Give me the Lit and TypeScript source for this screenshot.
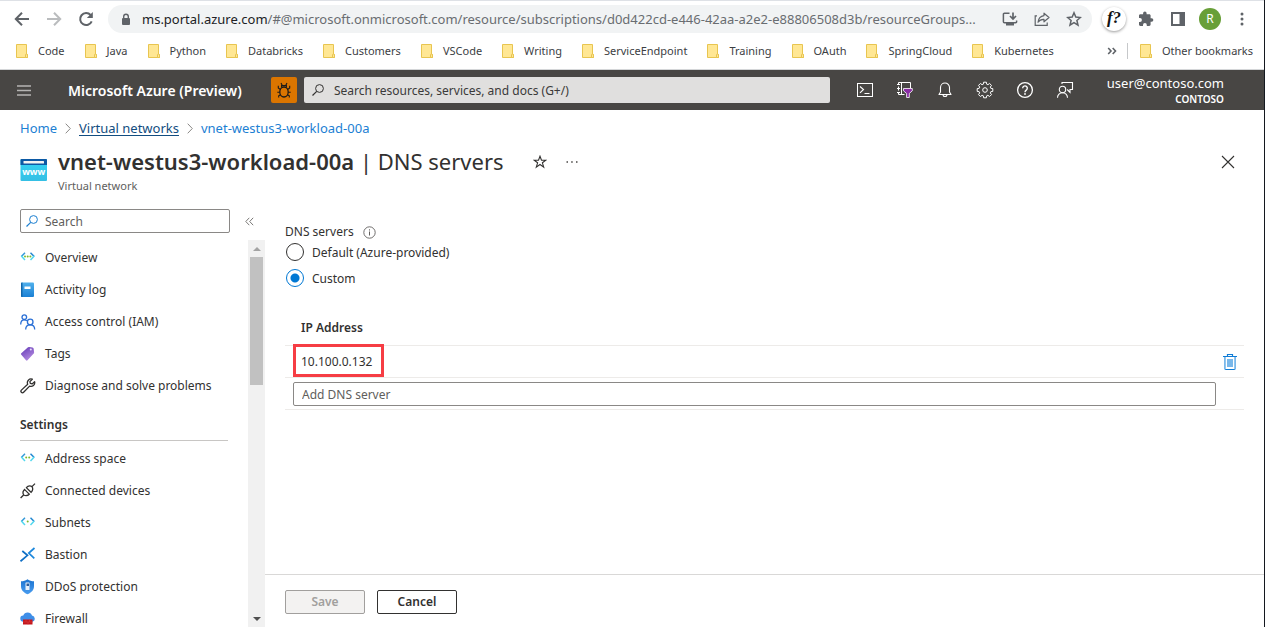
import { LitElement, html, svg, css, TemplateResult } from "lit";
import { customElement, property, state } from "lit/decorators.js";

const icon = (w: number, h: number, body: TemplateResult, box = `0 0 ${w} ${h}`) =>
  html`<svg width=${w} height=${h} viewBox=${box} fill="none" aria-hidden="true">${body}</svg>`;

const base = css`
  * { box-sizing: border-box; }
  svg { display: block; flex: none; }
  button { font: inherit; color: inherit; background: none; border: 0; padding: 0; margin: 0; cursor: pointer; }
  input { font: inherit; margin: 0; }
  a { color: inherit; text-decoration: none; }
`;

/* ---------- Browser chrome ---------- */

const back = icon(16, 16, svg`<path d="M15 8H2.2M8 1.8 1.8 8 8 14.2" stroke="#5f6368" stroke-width="2"/>`);
const forward = icon(16, 16, svg`<path d="M1 8h12.8M8 1.8 14.2 8 8 14.2" stroke="#babcbe" stroke-width="2"/>`);
const reload = icon(16, 16, svg`<path d="M13.7 10.4A6 6 0 1 1 12.6 4" stroke="#5f6368" stroke-width="2"/><path d="M14.8 1v6H8.8z" fill="#5f6368"/>`);
const lock = icon(10, 13, svg`<rect x="1" y="5" width="8" height="7" rx="1" fill="#5f6368"/><path d="M2.7 6V3.6a2.3 2.3 0 0 1 4.6 0V6" stroke="#5f6368" stroke-width="1.4"/>`);
const install = icon(16, 16, svg`<path d="M7.500 2.200H2.400a1 1 0 0 0-1 1v7.600a1 1 0 0 0 1 1h11.200a1 1 0 0 0 1-1V9.500" stroke="#5f6368" stroke-width="1.500"/><path d="M4 12h8v2.500H4z" fill="#5f6368"/><path d="M11 1.500v6.200M8 5l3 3 3-3" stroke="#5f6368" stroke-width="1.700"/>`);
const share = icon(16, 16, svg`<path d="M3 4.800H1.200v9.600h12v-3" stroke="#5f6368" stroke-width="1.200"/><path d="M10 2.200l5 4.300-5 4.300V8.400C7.300 8.300 5.400 9.200 4 11.200 4.400 7.600 6.400 5.100 10 4.600z" stroke="#5f6368" stroke-width="1.200" stroke-linejoin="round"/>`);
const starChrome = icon(16, 16, svg`<path d="m8 1.800 1.800 4.300 4.600.4-3.500 3 1.100 4.600L8 11.600l-4 2.500 1.100-4.600-3.500-3 4.600-.4z" stroke="#5f6368" stroke-width="1.500"/>`);
const puzzle = icon(16, 16, svg`<path d="M13.600 7.300h-1V4.600c0-.8-.6-1.400-1.400-1.400H8.600v-1a1.700 1.700 0 0 0-3.500 0v1H2.400C1.600 3.200 1 3.800 1 4.600v2.500h1a1.900 1.900 0 0 1 0 3.800H1v2.600c0 .8.6 1.400 1.400 1.400H5v-1a1.900 1.900 0 0 1 3.800 0v1h2.400c.8 0 1.400-.6 1.400-1.400v-2.700h1a1.700 1.700 0 0 0 0-3.500z" fill="#5f6368"/>`);
const panel = icon(14, 14, svg`<rect x="1" y="1" width="12" height="12" stroke="#5f6368" stroke-width="2"/><path d="M8.500 1H13v12H8.500z" fill="#5f6368"/>`);
const kebab = icon(4, 14, svg`<circle cx="2" cy="2" r="1.500" fill="#5f6368"/><circle cx="2" cy="7" r="1.500" fill="#5f6368"/><circle cx="2" cy="12" r="1.500" fill="#5f6368"/>`);
const folder = icon(12, 14, svg`<path d="M.5.5h10v10h1v3H.5z" fill="#ffe794" stroke="#e8c550"/><path d="M9.500 13.500V11q0-1 1-1t1 1v2.500z" fill="#ffe794" stroke="#e8c550"/>`);
const overflow = icon(10, 8, svg`<path d="M1.200 1 4 4 1.200 7M5.700 1l2.800 3-2.800 3" stroke="#5f6368" stroke-width="1.600"/>`);

@customElement("browser-bar")
class BrowserBar extends LitElement {
  static styles = [base, css`
    :host { display: block; color: #3c4043; background: #fff; border-top: 1px solid #dee1e6; border-bottom: 1px solid #d4d6d8; }
    .toolbar { display: flex; align-items: center; gap: 6px; padding: 4px 6px; }
    .group { display: flex; }
    .tool { width: 32px; height: 28px; display: flex; align-items: center; justify-content: center; }
    .omnibox { flex: 1; min-width: 0; height: 28px; display: flex; align-items: center; padding: 0 2px 0 13px; border-radius: 14px; background: #f1f3f4; }
    .url { flex: 1; min-width: 0; margin-left: 11px; overflow: hidden; white-space: nowrap; font-size: 13px; line-height: 20px; color: #696d71; }
    .host { color: #202124; }
    .ext { width: 24px; height: 24px; border-radius: 50%; background: #fff; box-shadow: 0 1px 3px #0006; font: italic bold 17px/22px "Liberation Serif", serif; color: #111; text-align: center; }
    .avatar { width: 22px; height: 22px; border-radius: 50%; background: #689f38; color: #fff; font-size: 12px; line-height: 22px; text-align: center; }
    .bookmarks { display: flex; align-items: center; height: 32px; padding: 0 11px 4px 16px; font-size: 11px; line-height: 16px; white-space: nowrap; }
    .list { flex: 1; display: flex; gap: 20px; min-width: 0; }
    .mark { display: flex; align-items: center; gap: 10px; }
    .rule { width: 1px; height: 16px; margin: 0 12px 0 10px; background: #c6c8ca; }
  `];

  render() {
    const marks = ["Code", "Java", "Python", "Databricks", "Customers", "VSCode", "Writing", "ServiceEndpoint", "Training", "OAuth", "SpringCloud", "Kubernetes"];
    return html`
      <div class="toolbar">
        <div class="group">
          <button class="tool" aria-label="Back">${back}</button>
          <button class="tool" aria-label="Forward">${forward}</button>
          <button class="tool" aria-label="Reload">${reload}</button>
        </div>
        <div class="omnibox">
          ${lock}
          <div class="url"><span class="host">ms.portal.azure.com</span>/#@microsoft.onmicrosoft.com/resource/subscriptions/d0d422cd-e446-42aa-a2e2-e88806508d3b/resourceGroups...</div>
          <button class="tool" aria-label="Install">${install}</button>
          <button class="tool" aria-label="Share">${share}</button>
          <button class="tool" aria-label="Bookmark">${starChrome}</button>
        </div>
        <div class="group">
          <button class="tool" aria-label="Extension"><span class="ext">f?</span></button>
          <button class="tool" aria-label="Extensions">${puzzle}</button>
          <button class="tool" aria-label="Side panel">${panel}</button>
          <button class="tool" aria-label="Profile"><span class="avatar">R</span></button>
          <button class="tool" aria-label="Menu">${kebab}</button>
        </div>
      </div>
      <div class="bookmarks">
        <div class="list">${marks.map((m) => html`<a class="mark" href="#">${folder}<span>${m}</span></a>`)}</div>
        <button aria-label="More bookmarks">${overflow}</button>
        <span class="rule"></span>
        <a class="mark" href="#">${folder}<span>Other bookmarks</span></a>
      </div>`;
  }
}

/* ---------- Portal header ---------- */

const burger = icon(14, 11, svg`<path d="M0 1h14M0 5.500h14M0 10h14" stroke="#b5b4b2" stroke-width="1.400"/>`);
const bug = icon(16, 18, svg`<ellipse cx="8" cy="11" rx="4.200" ry="5" stroke="#1b1a19" stroke-width="1.300"/><path d="M5.600 6.500V4.600h4.800v1.900M6.300 4.400 5 2M9.700 4.400 11 2M4 8.300 2.300 7V4.800M12 8.300 13.700 7V4.800M3.800 11.200H1.300M12.200 11.200h2.500M4.500 13.800l-1.800 1v1.700M11.500 13.800l1.800 1v1.700" stroke="#1b1a19" stroke-width="1.100"/>`);
const lens = (color: string) => icon(12, 12, svg`<circle cx="7.500" cy="4.500" r="3.900" stroke=${color}/><path d="M4.700 7.300.5 11.500" stroke=${color} stroke-width="1.200"/>`);
const shell = icon(18, 16, svg`<rect x="1.500" y="1.500" width="15" height="13" stroke="#fff"/><path d="m4 4.500 3.500 3L4 10.800M8.500 11.500h5" stroke="#fff" stroke-width="1.100"/>`);
const filter = icon(18, 18, svg`<path d="M2.500 1.500h12V7M5.500 1.500v12M2.500 13.500h6M2.500 1.500v2M2.500 11.500v2M1 3.500h3M1 7.500h3M1 11.500h3M2.500 5.500v4" stroke="#fff"/><path d="M7.500 7.500h8.800v2.300l-3 2.700v4h-2.700v-4l-3.100-2.700z" fill="#8a2da5" stroke="#fff" stroke-width=".8"/>`);
const bell = icon(16, 18, svg`<path d="M2 13.500h12L12.500 11V6.500a4.500 4.500 0 0 0-9 0V11zM6 13.500a2 2 0 0 0 4 0" stroke="#fff" stroke-width="1.100" stroke-linejoin="round"/>`);
const gear = icon(18, 18, svg`<circle cx="9" cy="9" r="2.300" stroke="#fff"/><path d="m7.600 1.200-.3 2-1.200.5-1.700-1.200-1.900 1.900 1.200 1.700-.5 1.200-2 .3v2.800l2 .3.500 1.200-1.200 1.700 1.900 1.900 1.700-1.200 1.200.5.300 2h2.800l.3-2 1.200-.5 1.700 1.200 1.900-1.900-1.200-1.700.5-1.200 2-.3V7.600l-2-.3-.5-1.200 1.200-1.700-1.900-1.900-1.700 1.200-1.200-.5-.3-2z" stroke="#fff" stroke-linejoin="round"/>`);
const help = icon(18, 18, svg`<circle cx="9" cy="9" r="7.400" stroke="#fff" stroke-width="1.300"/><path d="M6.700 7.200a2.300 2.300 0 1 1 3.700 1.800C9.500 9.700 9 10 9 11.200" stroke="#fff" stroke-width="1.400"/><circle cx="9" cy="13" r=".9" fill="#fff"/>`);
const feedback = icon(18, 18, svg`<circle cx="6.500" cy="8.500" r="3.200" stroke="#fff" stroke-width="1.100"/><path d="M1.500 16.800c0-3.200 2.200-5.100 5-5.100s5 1.900 5 5.100M6 3V1.500h10.500v7H14v2.800l-2.800-2.800" stroke="#fff" stroke-width="1.100"/>`);

@customElement("portal-header")
class PortalHeader extends LitElement {
  static styles = [base, css`
    :host { display: flex; align-items: center; height: 40px; background: #484644; color: #fff; }
    .menu { width: 48px; height: 40px; padding-left: 17px; }
    .brand { width: 203px; margin-left: 20px; padding-top: 2px; font-size: 14px; line-height: 20px; font-weight: 600; white-space: nowrap; }
    .bug { width: 26px; height: 26px; display: flex; align-items: center; justify-content: center; background: #db7500; border-radius: 2px; }
    .search { flex: 1; min-width: 0; height: 26px; display: flex; align-items: center; gap: 10px; margin: 0 15px 0 7px; padding-left: 8px; background: #e0dfde; border-radius: 2px; }
    .search input { flex: 1; min-width: 0; border: 0; outline: 0; padding: 2px 0 0; background: none; font-size: 12px; line-height: 18px; color: #323130; }
    .search input::placeholder { color: #3b3a39; opacity: 1; }
    .icons { display: flex; }
    .icons button { width: 40px; height: 40px; display: flex; align-items: center; justify-content: center; }
    .account { width: 179px; padding: 2px 40px 0 0; text-align: right; font-size: 13px; line-height: 16px; }
    .tenant { font-size: 10px; line-height: 16px; font-weight: 600; }
  `];

  render() {
    const tools: [string, TemplateResult][] = [["Cloud Shell", shell], ["Directories", filter], ["Notifications", bell], ["Settings", gear], ["Help", help], ["Feedback", feedback]];
    return html`
      <button class="menu" aria-label="Portal menu">${burger}</button>
      <a class="brand" href="#">Microsoft Azure (Preview)</a>
      <button class="bug" aria-label="Report a bug">${bug}</button>
      <label class="search">${lens("#323130")}<input type="text" aria-label="Search resources" placeholder="Search resources, services, and docs (G+/)"></label>
      <div class="icons">${tools.map(([n, i]) => html`<button aria-label=${n}>${i}</button>`)}</div>
      <div class="account"><div>user@contoso.com</div><div class="tenant">CONTOSO</div></div>`;
  }
}

/* ---------- Side menu ---------- */

const brackets = (dots: number[]) => icon(16, 16, svg`
  <path d="M5 2.800 1.300 6.500" stroke="#3399d8" stroke-width="1.500"/><path d="M1.300 6.100 5 9.900" stroke="#50d8ee" stroke-width="1.500"/>
  <path d="m10.500 2.800 3.700 3.700" stroke="#1f86d0" stroke-width="1.500"/><path d="m14.200 6.100-3.700 3.800" stroke="#50d8ee" stroke-width="1.500"/>
  ${dots.map((x) => svg`<circle cx=${x} cy="6.400" r="1" fill="#7fba29"/>`)}`);
const logbook = icon(16, 16, svg`<defs><linearGradient id="lg" x2="0" y2="1"><stop stop-color="#50b0ec"/><stop offset="1" stop-color="#1b80d4"/></linearGradient></defs><rect x="1" y=".5" width="13" height="14.500" rx="1" fill="url(#lg)"/><path d="M1 1.500a1 1 0 0 1 1-1h.5v14.500H2a1 1 0 0 1-1-1z" fill="#1267ac"/><rect x="4.500" y="4.500" width="6" height="2.500" fill="#fff"/>`);
const people = icon(16, 16, svg`<circle cx="4.300" cy="3.200" r="2.300" stroke="#2b70d6" stroke-width="1.300"/><path d="M.7 10.500c0-3 1.400-4.700 3.600-4.700 1.200 0 2 .4 2.600 1.100" stroke="#2b70d6" stroke-width="1.300"/><circle cx="10.200" cy="8" r="2.800" stroke="#2b70d6" stroke-width="1.300"/><path d="M5.700 15.500c0-3 1.800-4.600 4.500-4.600s4.500 1.600 4.500 4.600" stroke="#2b70d6" stroke-width="1.300"/>`);
const tag = icon(16, 16, svg`<defs><linearGradient id="tg" x1="0" y1="0" x2=".6" y2="1"><stop stop-color="#5f35b5"/><stop offset="1" stop-color="#b48be0"/></linearGradient></defs><path d="M1.300 7.200 8 1.300a1.500 1.500 0 0 1 1.200-.4l3.300.6a1.500 1.500 0 0 1 1.200 1.300l.4 3.600a1.500 1.500 0 0 1-.4 1.200L7.500 14.300a1 1 0 0 1-1.500 0L1.300 8.700a1 1 0 0 1 0-1.500z" fill="url(#tg)"/><circle cx="10.800" cy="3.600" r="1" fill="#e9defa"/>`);
const wrench = icon(16, 16, svg`<path d="M14.600 3.700a3.700 3.700 0 0 1-5 4.400l-6 6.200a1.500 1.500 0 0 1-2.200-2.200l6.300-5.900a3.700 3.700 0 0 1 4.600-5L9.900 3.600l.4 1.800 1.800.5z" stroke="#323130" stroke-width="1.300" stroke-linejoin="round"/>`);
const plug = icon(16, 16, svg`<path d="m.6 15 3-3M15 .6l-3 3M6.300 4.600l4.700 4.700M4.500 6.400l4.700 4.700M5 6c-1.800 1.600-2.600 4-1.300 6 2 1.200 4.300.6 6-1.300M6 4.900c1.800-2 4.100-2.600 6-1.300 1.300 2 .6 4.300-1.300 6.100" stroke="#323130" stroke-width="1.300"/>`);
const bastion = icon(16, 16, svg`<path d="M2.300 4 7.500 8.300.5 14.300" stroke="#0f6fc5" stroke-width="1.700"/><path d="M14.500 1 8.800 6l5.500 5.300" stroke="#1c87dc" stroke-width="1.700"/>`);
const shield = icon(16, 16, svg`<defs><linearGradient id="sg" x2="0" y2="1"><stop stop-color="#1b73d0"/><stop offset="1" stop-color="#4a9df0"/></linearGradient></defs><path d="M7.500.3C9.500 1.800 11.700 2.300 14 2.300v5c0 4-3 6.500-6.500 8C4 13.800 1 11.300 1 7.300v-5C3.300 2.300 5.500 1.800 7.500.3z" fill="url(#sg)"/><rect x="5.500" y="3.500" width="4" height="7.500" rx=".5" fill="#e8f0fa"/><rect x="6.500" y="4.500" width="2.500" height="2.500" fill="#2f5e9a"/>`);
const firewall = icon(16, 16, svg`<path d="M3.500 10.800a3.100 3.100 0 0 1-.2-6.200A4.600 4.600 0 0 1 12 4.500a3.200 3.200 0 0 1 .2 6.300z" fill="#3e8ee8"/><rect x="3" y="8.500" width="9.500" height="5" fill="#c4161c"/><path d="M3 11h9.500M6 8.500V11M9.500 8.500V11M8 11v2.500" stroke="#d8403f" stroke-width=".6"/>`);
const collapse = icon(9, 9, svg`<path d="M4.300.8.8 4.500l3.500 3.700M8.200.8 4.700 4.500l3.500 3.700" stroke="#7a7876"/>`);

@customElement("side-menu")
class SideMenu extends LitElement {
  static styles = [base, css`
    :host { display: flex; flex-direction: column; width: 265px; min-height: 0; }
    .top { display: flex; align-items: center; padding: 4px 11px 0 20px; }
    .search { flex: 1; min-width: 0; height: 24px; display: flex; align-items: center; gap: 7px; margin-right: 15px; padding-left: 5px; border: 1px solid #8a8886; border-radius: 2px; }
    .search input { flex: 1; min-width: 0; border: 0; outline: 0; padding: 2px 0 0; background: none; font-size: 12px; line-height: 18px; }
    .search input::placeholder { color: #605e5c; opacity: 1; }
    .scroller { flex: 1; min-height: 0; display: flex; margin-top: 7px; overflow: hidden; }
    .items { flex: 1; padding: 2px 20px 0; }
    .item { display: flex; align-items: center; gap: 9px; height: 32px; font-size: 12px; line-height: 18px; white-space: nowrap; }
    .heading { margin: 13px 0 2px; padding-bottom: 6px; border-bottom: 1px solid #c8c6c4; font-size: 12px; line-height: 19px; font-weight: 600; }
    .bar { width: 17px; display: flex; flex-direction: column; align-items: center; background: #f1f1f1; }
    .arrow { height: 17px; display: flex; align-items: center; }
    .thumb { width: 13px; height: 33%; background: #c1c1c1; }
    .track { flex: 1; min-height: 0; }
  `];

  private item = ([name, pic]: [string, TemplateResult]) => html`<a class="item" href="#">${pic}<span>${name}</span></a>`;

  render() {
    return html`
      <div class="top">
        <label class="search">${lens("#1c7fd0")}<input type="text" aria-label="Search menu" placeholder="Search"></label>
        <button aria-label="Collapse menu">${collapse}</button>
      </div>
      <div class="scroller">
        <nav class="items">
          ${([["Overview", brackets([5, 7.700, 10.400])], ["Activity log", logbook], ["Access control (IAM)", people], ["Tags", tag], ["Diagnose and solve problems", wrench]] as [string, TemplateResult][]).map(this.item)}
          <h2 class="heading">Settings</h2>
          ${([["Address space", brackets([6.200, 9.200])], ["Connected devices", plug], ["Subnets", brackets([7.700])], ["Bastion", bastion], ["DDoS protection", shield], ["Firewall", firewall]] as [string, TemplateResult][]).map(this.item)}
        </nav>
        <div class="bar" aria-hidden="true">
          <span class="arrow">${icon(8, 4, svg`<path d="M0 4 4 0l4 4z" fill="#a3a3a3"/>`)}</span>
          <span class="thumb"></span>
          <span class="track"></span>
          <span class="arrow">${icon(8, 4, svg`<path d="m0 0 4 4 4-4z" fill="#505050"/>`)}</span>
        </div>
      </div>`;
  }
}

/* ---------- DNS server form ---------- */

const info = icon(13, 13, svg`<circle cx="6.500" cy="6.500" r="5.700" stroke="#605e5c" stroke-width=".9"/><path d="M6.500 5.500v4M6.500 3.300v1.200" stroke="#605e5c"/>`);
const trash = icon(14, 16, svg`<path d="M0 2.500h14M4.500 2.500v-2h5v2M2 15.500h10" stroke="#0f7cd6" stroke-width="1.200"/><path d="M1.900 3v12.500M12.100 3v12.500" stroke="#7ab8ea" stroke-width="1.800"/><path d="M4 5h6v8H4z" fill="#7ab8ea"/>`);

@customElement("dns-form")
class DnsForm extends LitElement {
  @property() address = "10.100.0.132";
  @state() private mode = "custom";

  static styles = [base, css`
    :host { display: flex; flex-direction: column; flex: 1; min-width: 0; font-size: 12px; line-height: 18px; }
    .body { flex: 1; min-height: 0; padding: 18px 20px 0; }
    fieldset { border: 0; margin: 0; padding: 0; }
    legend { display: flex; align-items: center; gap: 9px; padding: 0 0 1px; }
    .choice { display: flex; align-items: center; gap: 8px; width: max-content; height: 20px; margin-bottom: 6px; padding-left: 1px; }
    .choice span { padding-top: 2px; }
    .choice input { appearance: none; width: 18px; height: 18px; border: 1px solid #323130; border-radius: 50%; background: #fff; }
    .choice input:checked { border-color: #0078d4; background: radial-gradient(circle, #0078d4 4px, #fff 5px); }
    table { width: 100%; margin-top: 14px; border-collapse: collapse; table-layout: fixed; }
    th { height: 37px; padding: 0 0 8px 16px; text-align: left; vertical-align: bottom; font-weight: 600; }
    tr { border-bottom: 1px solid #edebe9; }
    td { height: 32px; padding: 2px 0 0 8px; }
    .side { width: 28px; padding-left: 7px; }
    .side button { display: block; }
    .mark { position: relative; padding-left: 8px; }
    .mark::after { content: ""; position: absolute; inset: -9px -12px -7px 0; border: 3px solid #f63d44; }
    .add { display: block; width: 100%; height: 24px; padding: 0 8px; border: 1px solid #8a8886; border-radius: 2px; outline: 0; color: #323130; }
    .add::placeholder { color: #605e5c; opacity: 1; }
    .footer { display: flex; gap: 12px; padding: 15px 20px 13px; border-top: 1px solid #d9d8d7; }
    .btn { width: 80px; height: 24px; border: 1px solid #323130; border-radius: 2px; font-weight: 600; }
    .btn:disabled { border-color: #a19f9d; background: #f3f2f1; color: #a19f9d; }
  `];

  private choice(value: string, label: string) {
    return html`<label class="choice"><input type="radio" name="dns" value=${value} .checked=${this.mode === value} @change=${() => (this.mode = value)}><span>${label}</span></label>`;
  }

  render() {
    return html`
      <div class="body">
        <fieldset>
          <legend>DNS servers ${info}</legend>
          ${this.choice("default", "Default (Azure-provided)")}
          ${this.choice("custom", "Custom")}
        </fieldset>
        <table>
          <thead><tr><th>IP Address</th><th class="side"></th></tr></thead>
          <tbody>
            <tr><td><span class="mark">${this.address}</span></td><td class="side"><button aria-label="Delete">${trash}</button></td></tr>
            <tr><td><input class="add" type="text" aria-label="Add DNS server" placeholder="Add DNS server"></td><td class="side"></td></tr>
          </tbody>
        </table>
      </div>
      <div class="footer"><button class="btn" disabled>Save</button><button class="btn">Cancel</button></div>`;
  }
}

/* ---------- Page ---------- */

const vnet = icon(28, 24, svg`<defs><linearGradient id="vg" x2="0" y2="1"><stop stop-color="#32d4f5"/><stop offset="1" stop-color="#35bfe4"/></linearGradient></defs><rect x=".5" y="1" width="26.500" height="22" rx="1" fill="url(#vg)"/><path d="M.5 7V2a1 1 0 0 1 1-1h24.500a1 1 0 0 1 1 1v5z" fill="#0c59a4"/><rect x="3.500" y="3" width="20.500" height="2.500" rx=".5" fill="#f2f2f2"/><text x="13.700" y="16.500" text-anchor="middle" font-family="Noto Sans, sans-serif" font-size="9" font-weight="700" fill="#fff">www</text>`);
const chevron = icon(6, 11, svg`<path d="m.7.7 4.600 4.800L.7 10.300" stroke="#8a8886"/>`);
const star = icon(14, 14, svg`<path d="m7 1.200 1.500 4h4.300L9.400 7.800l1.300 4.300L7 9.500l-3.700 2.600 1.300-4.300L1.200 5.200h4.300z" stroke="#323130" stroke-width="1.100"/>`);
const more = icon(12, 4, svg`<path d="M.5 2H2M5.200 2h1.500M10 2h1.500" stroke="#484644" stroke-width="1.300"/>`);
const close = icon(14, 14, svg`<path d="m1 1 12 12M13 1 1 13" stroke="#323130" stroke-width="1.100"/>`);

@customElement("app-root")
class AppRoot extends LitElement {
  static styles = [base, css`
    :host { display: flex; flex-direction: column; height: 100vh; overflow: hidden; background: #fff; color: #323130; border-right: 1px solid #14181f; box-sizing: border-box; font-family: "Noto Sans", "Open Sans", sans-serif; }
    browser-bar, portal-header { flex: none; }
    .crumbs { display: flex; align-items: center; gap: 8px; padding: 9px 20px 0; font-size: 13px; line-height: 18px; color: #1c80d3; }
    .current { color: #124d80; text-decoration: underline; text-underline-offset: 2px; }
    .title { display: flex; align-items: flex-start; padding: 9px 29px 0 20px; }
    .pic { margin: 12px 10px 0 0; }
    h1 { margin: 0; font-size: 22px; line-height: 30px; font-weight: 400; white-space: nowrap; }
    h1 strong { font-weight: 600; }
    .sub { font-size: 11px; line-height: 20px; color: #605e5c; }
    .acts { flex: 1; height: 32px; display: flex; align-items: center; gap: 19px; padding-left: 29px; }
    .close { margin-left: auto; }
    .main { flex: 1; min-height: 0; display: flex; }
    side-menu { flex: none; margin-top: 9px; }
    dns-form { margin-top: 9px; }
  `];

  render() {
    return html`
      <browser-bar></browser-bar>
      <portal-header></portal-header>
      <nav class="crumbs" aria-label="Breadcrumb"><a href="#">Home</a>${chevron}<a class="current" href="#">Virtual networks</a>${chevron}<a href="#">vnet-westus3-workload-00a</a></nav>
      <header class="title">
        <span class="pic">${vnet}</span>
        <div><h1><strong>vnet-westus3-workload-00a</strong> | DNS servers</h1><div class="sub">Virtual network</div></div>
        <div class="acts">
          <button aria-label="Favorite">${star}</button><button aria-label="More">${more}</button>
          <button class="close" aria-label="Close">${close}</button>
        </div>
      </header>
      <div class="main"><side-menu></side-menu><dns-form></dns-form></div>`;
  }
}
